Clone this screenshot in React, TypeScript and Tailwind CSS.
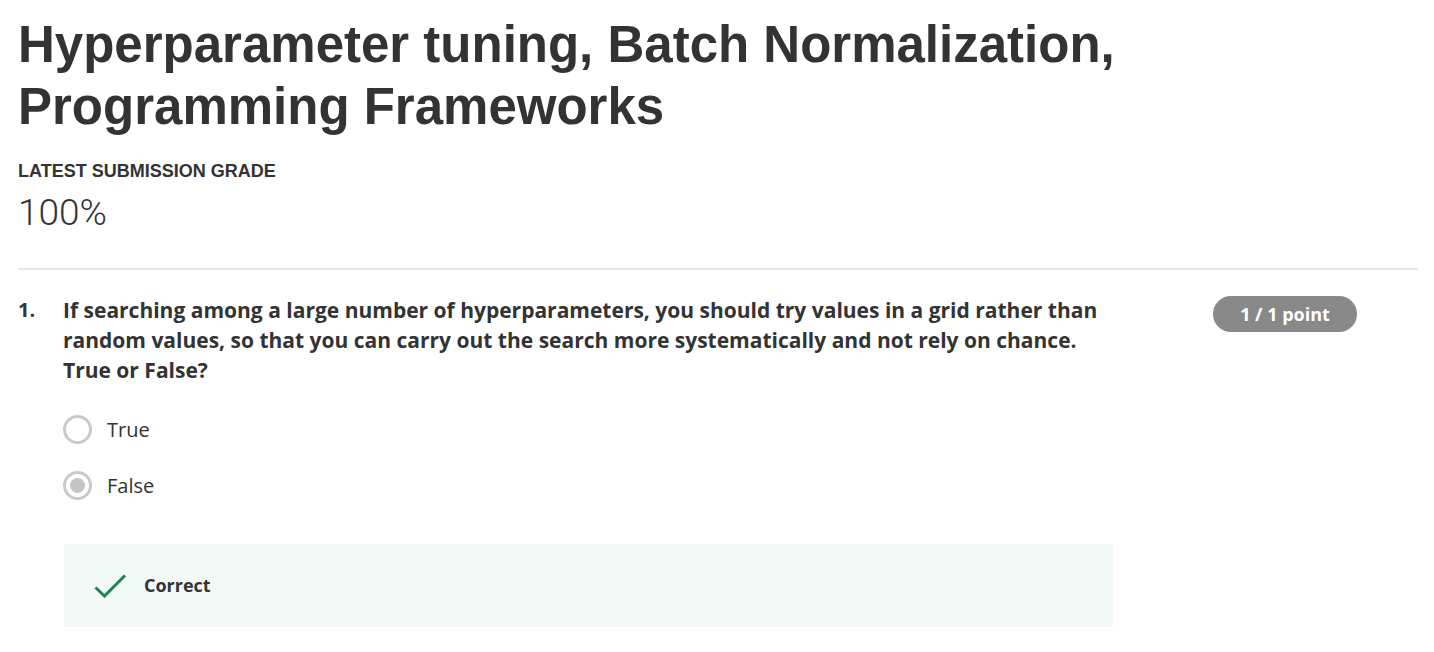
import React from "react";

// Quiz result view: heading, grade, one answered question with feedback.

const OPTIONS = [
  { label: "True", selected: false },
  { label: "False", selected: true },
];

function Radio({ selected }: { selected: boolean }) {
  return (
    <span className="flex h-[29px] w-[29px] shrink-0 items-center justify-center rounded-full border-[3px] border-[#c9c9c9] bg-white">
      {selected && <span className="h-[15px] w-[15px] rounded-full bg-[#c4c4c4]" />}
    </span>
  );
}

export default function App() {
  return (
    <div className="min-h-screen bg-white pl-[18px] pr-[16px] pt-[14px] text-[#333]">
      <h1 className="font-['Liberation_Sans',Arial,sans-serif] text-[51px] font-bold leading-[62px] text-[#333]">
        Hyperparameter tuning, Batch Normalization,
        <br />
        Programming Frameworks
      </h1>

      <div className="mt-[23px] font-['Liberation_Sans',Arial,sans-serif] text-[18px] font-bold leading-5 text-[#333]">
        LATEST SUBMISSION GRADE
      </div>
      <div className="mt-[12px] font-['Roboto',sans-serif] text-[37px] font-light leading-[40px] text-[#333]">
        100%
      </div>

      <hr className="mt-[35px] border-t-2 border-[#e5e5e5]" />

      <div className="mt-[25px] flex font-['Open_Sans',sans-serif]">
        <div className="w-[45px] shrink-0 text-[20px] font-bold leading-[30px]">1.</div>
        <div className="w-[1050px] shrink-0">
          <p className="pr-[10px] text-[21px] font-bold leading-[30px] text-[#333]">
            If searching among a large number of hyperparameters, you should try values in a grid rather than
            random values, so that you can carry out the search more systematically and not rely on chance.
            True or False?
          </p>

          <div className="mt-[30px] flex flex-col gap-[27px]">
            {OPTIONS.map((opt) => (
              <div key={opt.label} className="flex items-center gap-[15px]">
                <Radio selected={opt.selected} />
                <span className="text-[20px] leading-[29px] text-[#333]">{opt.label}</span>
              </div>
            ))}
          </div>

          <div className="ml-[1px] mt-[44px] flex h-[83px] items-center bg-[#f3f9f7] pl-[30px]">
            <svg width="33" height="24" viewBox="0 0 33 24" fill="none" className="mt-[1px]">
              <path d="M1.5 13.5 L10.5 22 L31 1.5" stroke="#1f8354" strokeWidth="3" />
            </svg>
            <span className="ml-[17px] text-[18px] font-bold text-[#333]">Correct</span>
          </div>
        </div>

        <div className="ml-[100px] mt-[1px]">
          <span className="inline-flex h-[36px] w-[144px] items-center justify-center rounded-full bg-[#898989] text-[18px] font-bold text-white">
            1 / 1 point
          </span>
        </div>
      </div>
    </div>
  );
}
